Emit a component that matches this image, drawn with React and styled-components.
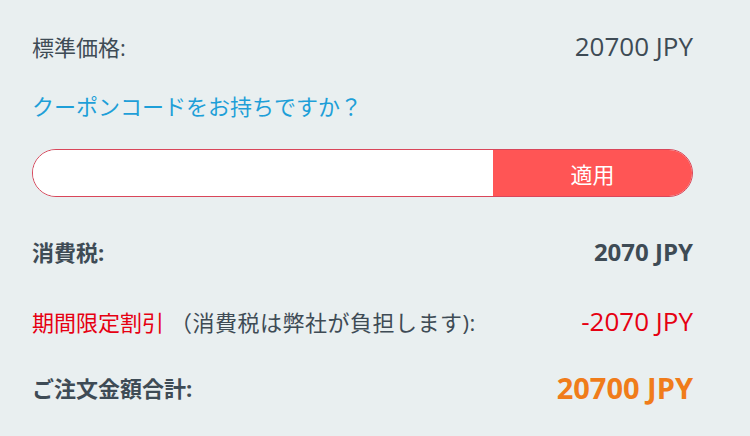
import React, { useState } from "react";
import styled, { createGlobalStyle } from "styled-components";

const GlobalStyle = createGlobalStyle`
  html, body {
    margin: 0;
    padding: 0;
    background: #e9eff0;
  }
  body {
    font-family: "Open Sans", "Noto Sans CJK JP", sans-serif;
    color: #3e4b55;
  }
`;

const Container = styled.div`
  width: 750px;
  height: 436px;
  box-sizing: border-box;
  padding: 26px 57px 0 32px;
  display: flex;
  flex-direction: column;
`;

const Row = styled.div`
  display: flex;
  justify-content: space-between;
  align-items: center;
  height: ${props => props.h || 40}px;
  margin-bottom: ${props => props.mb || 0}px;
  font-size: 22px;
  font-weight: ${props => (props.bold ? 700 : 400)};
  white-space: nowrap;
`;

const Label = styled.span`
  color: #3e4b55;
`;

const Red = styled.span`
  color: #e60012;
`;

const Paren = styled.span`
  margin-left: 6px;
  letter-spacing: 0.5px;
`;

const Amount = styled.span`
  color: ${props => props.color || "#3e4b55"};
  font-size: ${props => props.size || 26}px;
`;

const CouponLink = styled.a`
  color: #1e9fd8;
  font-size: 22px;
  text-decoration: none;
  cursor: pointer;
  height: 40px;
  display: flex;
  align-items: center;
  margin-bottom: 24px;
`;

const Form = styled.form`
  display: flex;
  height: 48px;
  border: 1px solid #d9465a;
  border-radius: 24px;
  overflow: hidden;
  box-sizing: border-box;
  margin-bottom: 34px;
`;

const Input = styled.input`
  flex: 1;
  border: none;
  outline: none;
  padding: 0 20px;
  font-size: 18px;
  background: #fff;
`;

const Submit = styled.button`
  width: 199px;
  border: none;
  background: #ff5555;
  color: #fff;
  font-size: 22px;
  font-family: "Open Sans", "Noto Sans CJK JP", sans-serif;
  cursor: pointer;
`;

const App = () => {
  const [code, setCode] = useState("");

  return (
    <Container>
      <GlobalStyle />
      <Row mb={19}>
        <Label>標準価格:</Label>
        <Amount>20700 JPY</Amount>
      </Row>
      <CouponLink>クーポンコードをお持ちですか？</CouponLink>
      <Form onSubmit={ev => ev.preventDefault()}>
        <Input value={code} onChange={ev => setCode(ev.target.value)} />
        <Submit type="submit">適用</Submit>
      </Form>
      <Row bold mb={30}>
        <Label>消費税:</Label>
        <Amount size={24}>2070 JPY</Amount>
      </Row>
      <Row mb={26}>
        <Label>
          <Red>期間限定割引</Red>
          <Paren>（消費税は弊社が負担します):</Paren>
        </Label>
        <Amount color="#e60012">-2070 JPY</Amount>
      </Row>
      <Row bold>
        <Label>ご注文金額合計:</Label>
        <Amount color="#f07c1a" size={29}>
          20700 JPY
        </Amount>
      </Row>
    </Container>
  );
};

export default App;
